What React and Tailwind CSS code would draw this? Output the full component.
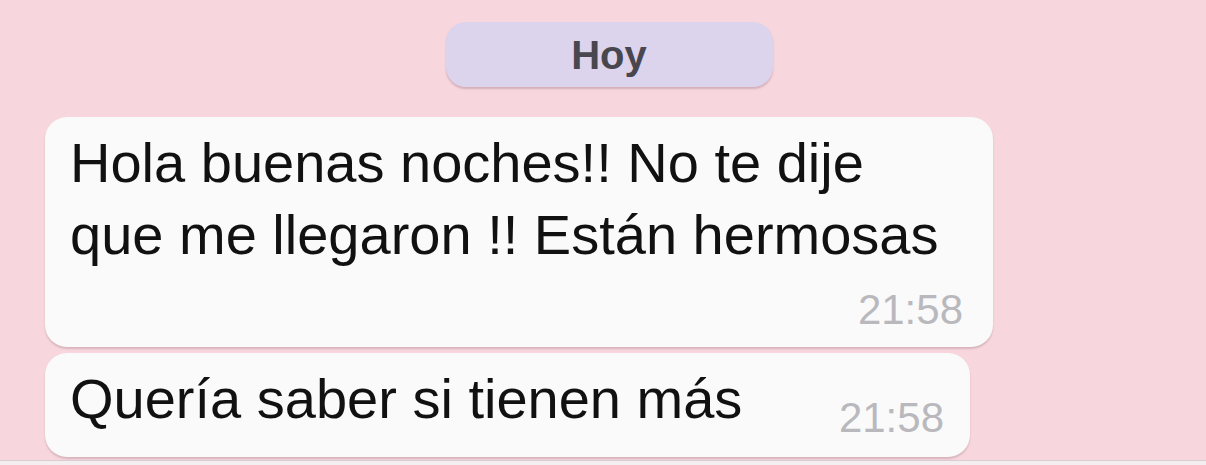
import React from 'react';

const font = { fontFamily: '"Liberation Sans", Arial, sans-serif' };

const App = () => {
    return (
        <div className="w-[1206px] h-[465px] overflow-hidden bg-[#f7d7dd] flex flex-col" style={font}>
            <div className="flex justify-center pt-[22px] pl-[12px]">
                <div className="w-[327px] h-[65px] rounded-[20px] bg-[#dcd3ec] shadow-[0_2px_2px_rgba(150,100,120,0.35)] flex items-center justify-center">
                    <span className="text-[40px] leading-none font-bold text-[#48474f]">Hoy</span>
                </div>
            </div>

            <div className="flex flex-col gap-[6px] pl-[45px] mt-[30px]">
                <div className="w-[948px] h-[230px] rounded-[22px] bg-[#fafafa] shadow-[0_2px_2px_rgba(150,100,120,0.3)] pl-[25px] pr-[30px] pt-[10px]">
                    <p className="text-[56px] leading-[72px] text-[#111]">
                        Hola buenas noches!! No te dije<br />que me llegaron !! Están hermosas
                    </p>
                    <div className="mt-[18px] text-right text-[42px] leading-none text-[#b9b9bd]">21:58</div>
                </div>

                <div className="w-[925px] h-[104px] rounded-[22px] bg-[#fafafa] shadow-[0_2px_2px_rgba(150,100,120,0.3)] pl-[25px] pr-[26px] pt-[10px] flex items-start justify-between">
                    <p className="text-[56px] leading-[72px] text-[#111]">Quería saber si tienen más</p>
                    <span className="mt-[34px] text-[42px] leading-none text-[#b9b9bd]">21:58</span>
                </div>
            </div>

            <div className="mt-auto h-[5px] border-t border-[#d9cdd1] bg-[#f4eef0]"></div>
        </div>
    );
};

export default App;
